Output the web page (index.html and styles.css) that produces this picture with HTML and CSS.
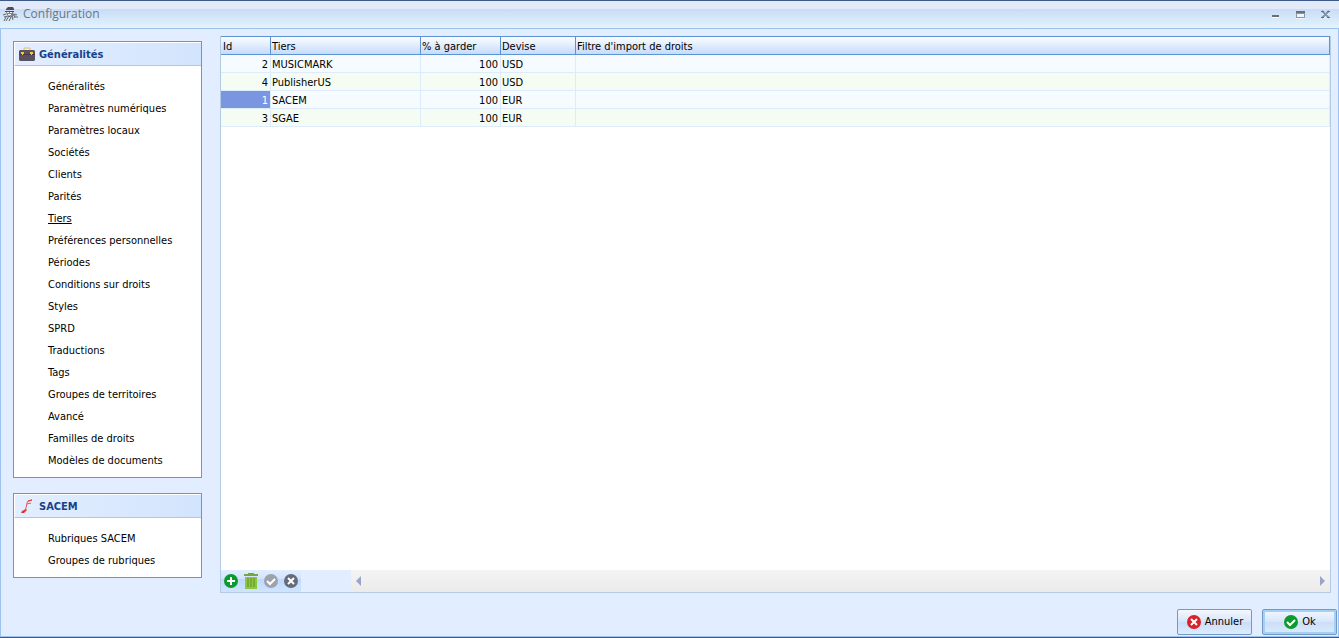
FILE: index.html
```html
<!DOCTYPE html>
<html lang="fr">
<head>
<meta charset="utf-8">
<title>Configuration</title>
<link rel="stylesheet" href="styles.css">
</head>
<body>
<div class="window">
  <header class="titlebar">
    <svg class="app-icon" viewBox="0 0 16 16" width="16" height="16" aria-hidden="true">
      <path d="M3 3l2-2h5l1 2v1H3zM2 5h9v1H2z" fill="#4b4f54"/>
      <path d="M3 6h7l1 3-2 1-5-1z" fill="#7b8086"/>
      <path d="M4 6h2v1H4zM7 6h2v1H7zM5 8h3v1H5z" fill="#f4f7fa"/>
      <path d="M0 9l3-1M1 11l4-1 3 1 4-3 2 1M3 11l-2 4M6 10l-3 5M8 11l-2 4M9 10l1 4M12 9l-1 3M12 11h3" stroke="#63686e" fill="none"/>
    </svg>
    <h1 class="title">Configuration</h1>
    <div class="controls">
      <button class="control" aria-label="Réduire"><svg viewBox="0 0 9 9" width="9" height="9"><path d="M1 5h7v2H1z" fill="#6b6f76"/><path d="M1 7h7v1H1z" fill="#fff"/></svg></button>
      <button class="control" aria-label="Agrandir"><svg viewBox="0 0 9 9" width="9" height="9"><path d="M0 1h9v7H0z" fill="#8496b4"/><path d="M0 1h9v2H0z" fill="#6b6f76"/><path d="M1 4h7v3H1zM0 8h9v1H0z" fill="#eef5fe"/></svg></button>
      <button class="control" aria-label="Fermer"><svg viewBox="0 0 9 9" width="9" height="9"><path d="M1 2l7 7M8 2L1 9" stroke="#fff" stroke-width="2"/><path d="M1 1l7 7M8 1L1 8" stroke="#8193b0" stroke-width="2"/><path d="M0 1h3v1H0zM6 1h3v1H6zM0 7h3v1H0zM6 7h3v1H6z" fill="#6b6f76"/></svg></button>
    </div>
  </header>
  <div class="body">
    <nav class="sidebar">
      <section class="group">
        <h2 class="group-title">
          <svg viewBox="0 0 16 16" width="16" height="16" aria-hidden="true"><path d="M5 3V1h6v2" fill="none" stroke="#e0c060"/><path d="M1 3h14l1 1v9l-1 1H1l-1-1V4z" fill="#5a5060"/><path d="M0 7h16v1H0z" fill="#443b4a"/><path d="M2 5h3v2H4v1H3V7H2zM11 5h3v2h-1v1h-1V7h-1z" fill="#f3c742"/></svg>
          Généralités
        </h2>
        <ul class="links">
          <li><a href="#">Généralités</a></li>
          <li><a href="#">Paramètres numériques</a></li>
          <li><a href="#">Paramètres locaux</a></li>
          <li><a href="#">Sociétés</a></li>
          <li><a href="#">Clients</a></li>
          <li><a href="#">Parités</a></li>
          <li><a href="#" class="current" aria-current="page">Tiers</a></li>
          <li><a href="#">Préférences personnelles</a></li>
          <li><a href="#">Périodes</a></li>
          <li><a href="#">Conditions sur droits</a></li>
          <li><a href="#">Styles</a></li>
          <li><a href="#">SPRD</a></li>
          <li><a href="#">Traductions</a></li>
          <li><a href="#">Tags</a></li>
          <li><a href="#">Groupes de territoires</a></li>
          <li><a href="#">Avancé</a></li>
          <li><a href="#">Familles de droits</a></li>
          <li><a href="#">Modèles de documents</a></li>
        </ul>
      </section>
      <section class="group">
        <h2 class="group-title">
          <svg viewBox="0 0 16 16" width="16" height="16" aria-hidden="true"><path d="M2 14l1-2 4-2 1 1-3 3z" fill="#e8302c"/><path d="M6 11l1-2 1-5 1-2 4-1M8 5l4-1" stroke="#e25a56" fill="none"/><path d="M9 2l4-1" stroke="#e8302c"/></svg>
          SACEM
        </h2>
        <ul class="links">
          <li><a href="#">Rubriques SACEM</a></li>
          <li><a href="#">Groupes de rubriques</a></li>
        </ul>
      </section>
    </nav>
    <main class="main">
      <div class="grid-panel">
        <table class="grid">
          <colgroup><col class="c-id"><col class="c-tiers"><col class="c-pct"><col class="c-dev"><col></colgroup>
          <thead><tr><th>Id</th><th>Tiers</th><th>% à garder</th><th>Devise</th><th>Filtre d'import de droits</th></tr></thead>
          <tbody>
            <tr><td class="num">2</td><td>MUSICMARK</td><td class="num">100</td><td>USD</td><td></td></tr>
            <tr><td class="num">4</td><td>PublisherUS</td><td class="num">100</td><td>USD</td><td></td></tr>
            <tr><td class="num selected">1</td><td>SACEM</td><td class="num">100</td><td>EUR</td><td></td></tr>
            <tr><td class="num">3</td><td>SGAE</td><td class="num">100</td><td>EUR</td><td></td></tr>
          </tbody>
        </table>
        <div class="grid-footer">
          <div class="tools">
            <button class="tool" aria-label="Ajouter"><svg viewBox="0 0 16 16" width="16" height="16"><circle cx="8" cy="8" r="7" fill="#0a9b2c"/><path d="M8 4v8M4 8h8" stroke="#fff" stroke-width="2"/></svg></button>
            <button class="tool" aria-label="Supprimer"><svg viewBox="0 0 16 16" width="16" height="16"><path d="M1 1h4V0h6v1h4v2H1z" fill="#73a83a"/><path d="M2 4h12v12H2z" fill="#8dc63f"/><path d="M5 5v9M8 5v9M11 5v9" stroke="#5f9130" stroke-width="1"/></svg></button>
            <button class="tool" aria-label="Valider"><svg viewBox="0 0 16 16" width="16" height="16"><circle cx="8" cy="8" r="7" fill="#9da2ac"/><path d="M4 8l3 3 5-5" stroke="#fff" stroke-width="2" fill="none"/></svg></button>
            <button class="tool" aria-label="Annuler la saisie"><svg viewBox="0 0 16 16" width="16" height="16"><circle cx="8" cy="8" r="7" fill="#656b78"/><path d="M5 5l6 6M11 5l-6 6" stroke="#fff" stroke-width="2"/></svg></button>
          </div>
          <div class="scrollbar">
            <button class="arrow" aria-label="Défiler à gauche"><svg viewBox="0 0 6 10" width="6" height="10"><path d="M5 0v10L0 5z" fill="#99a5c8"/></svg></button>
            <button class="arrow" aria-label="Défiler à droite"><svg viewBox="0 0 6 10" width="6" height="10"><path d="M1 0v10l5-5z" fill="#99a5c8"/></svg></button>
          </div>
        </div>
      </div>
      <div class="actions">
        <button class="action"><svg viewBox="0 0 16 16" width="16" height="16" aria-hidden="true"><circle cx="8" cy="8" r="7" fill="#d8232a"/><path d="M5 5l6 6M11 5l-6 6" stroke="#fff" stroke-width="2"/></svg>Annuler</button>
        <button class="action default"><svg viewBox="0 0 16 16" width="16" height="16" aria-hidden="true"><circle cx="8" cy="8" r="7" fill="#0a9b2c"/><path d="M4 8l3 3 5-5" stroke="#fff" stroke-width="2" fill="none"/></svg>Ok</button>
      </div>
    </main>
  </div>
</div>
</body>
</html>
```
FILE: styles.css
```css
* { box-sizing: border-box; }
body {
  margin: 0;
  font: 11px/14px "DejaVu Sans Condensed", "DejaVu Sans", sans-serif;
  color: #000;
}
button { font: inherit; color: inherit; cursor: default; }
.window {
  display: flex;
  flex-direction: column;
  min-height: 100vh;
  border-top: 1px solid #3b5a88;
  border-bottom: 1px solid #3b5a88;
  background: #e2eeff;
}
.titlebar {
  display: flex;
  align-items: center;
  gap: 4px;
  height: 27px;
  padding: 0 9px 1px 3px;
  background: linear-gradient(#e2e9f8 0, #e2e9f8 8px, #c8dcf6 8px, #e3f3fd 100%);
}
.title {
  flex: 1;
  margin: 0;
  font: 12px/16px "Open Sans", "Noto Sans", sans-serif;
  color: #6c7580;
}
.controls { display: flex; gap: 16px; }
.control { display: flex; padding: 0; border: 0; background: none; }
.body {
  flex: 1;
  display: flex;
  gap: 18px;
  padding: 7px 1px 1px 12px;
  border: 1px solid #9cc3f0;
}
.sidebar {
  display: flex;
  flex-direction: column;
  gap: 15px;
  flex: 0 0 189px;
  padding-top: 5px;
}
.group { border: 1px solid #6a96d0; background: #fff; }
.group-title {
  display: flex;
  align-items: center;
  gap: 4px;
  height: 24px;
  margin: 0;
  padding: 1px 0 0 4px;
  border: 1px solid #fff;
  border-width: 1px 0 0 1px;
  border-bottom: 1px solid #a5c8f5;
  background: linear-gradient(90deg, #e3eeff, #d2e4fd);
  font-size: 11px;
  color: #15428b;
}
.links { margin: 0; padding: 10px 0 5px 34px; list-style: none; }
.links li { height: 22px; padding: 4px 0; }
.links a { color: #000; text-decoration: none; }
.links .current { text-decoration: underline; }
.main { flex: 1; display: flex; flex-direction: column; min-width: 0; }
.grid-panel {
  flex: 1;
  display: flex;
  flex-direction: column;
  margin-right: 6px;
  border: 1px solid #b4cbe6;
  border-top: 0;
  background: #fff;
}
.grid { width: 100%; table-layout: fixed; border-collapse: separate; border-spacing: 0; }
.c-id { width: 50px; }
.c-tiers { width: 150px; }
.c-pct { width: 80px; }
.c-dev { width: 75px; }
.grid th {
  height: 19px;
  padding: 2px 1px 0;
  border: 1px solid #5c93d6;
  border-left: 0;
  background: linear-gradient(#fbfdff, #c6dbfb);
  font-weight: normal;
  text-align: left;
}
.grid th:first-child { padding-left: 2px; }
.grid td {
  height: 18px;
  padding: 2px 2px 0 1px;
  border: 1px solid #deebfd;
  border-width: 0 1px 1px 0;
}
.grid tbody tr { background: #f5fbff; }
.grid tbody tr:nth-child(even) { background: #f4fcf3; }
.num { text-align: right; }
.grid .selected { background: #7b96e0; color: #fff; }
.grid-footer { display: flex; height: 22px; margin-top: auto; background: #e2eeff; }
.tools {
  display: flex;
  align-items: center;
  gap: 4px;
  padding: 0 2px;
  background: linear-gradient(#e0edff 0, #d2e4fd 9px, #bfd8fb 9px, #cfe4ff 100%);
}
.tool { display: flex; padding: 0; border: 0; background: none; }
.scrollbar {
  flex: 1;
  display: flex;
  justify-content: space-between;
  align-items: center;
  margin-left: 50px;
  padding: 0 5px;
  background: linear-gradient(#f4f4f4, #ebebeb);
}
.arrow { display: flex; padding: 0; border: 0; background: none; }
.actions { display: flex; justify-content: flex-end; gap: 10px; padding-top: 16px; }
.action {
  display: flex;
  justify-content: center;
  align-items: center;
  gap: 3px;
  width: 75px;
  height: 26px;
  padding: 0;
  border: 1px solid #7498c8;
  border-radius: 2px;
  background: linear-gradient(#f4f8fe, #d7e5f9 50%, #cbdef8 50%, #dcebfd);
}
.default { box-shadow: inset 0 0 0 2px #a5d0f5; }
```
